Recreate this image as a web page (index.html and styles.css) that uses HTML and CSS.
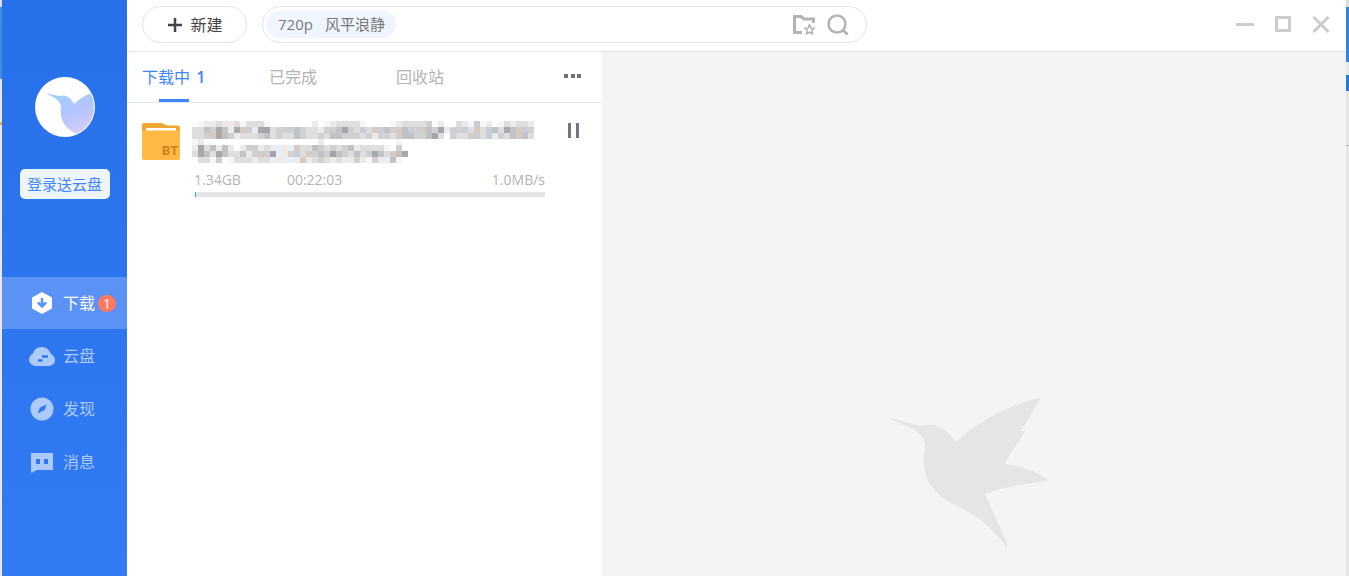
FILE: index.html
```
<!DOCTYPE html>
<html lang="zh-CN">
<head>
  <meta charset="UTF-8" />
  <meta name="viewport" content="width=device-width, initial-scale=1.0" />
  <title>下载</title>
  <link rel="stylesheet" href="styles.css">
</head>
<body>
  <div class="app">
    <aside class="sidebar">
      <svg class="avatar" viewBox="0 0 60 60" aria-hidden="true">
        <defs>
          <linearGradient id="wing" x1="0.2" y1="0" x2="0.7" y2="1">
            <stop offset="0" stop-color="#9fd2ff" />
            <stop offset="0.5" stop-color="#b3c4fc" />
            <stop offset="1" stop-color="#dccdfa" />
          </linearGradient>
          <clipPath id="round"><circle cx="30" cy="30" r="29" /></clipPath>
        </defs>
        <circle cx="30" cy="30" r="30" fill="#fff" />
        <path clip-path="url(#round)" fill="url(#wing)" d="M11 16L24 19C32 17 36 21 39 27C45 21 51 18 60 14V60H48C33 54 24 46 26 31C26 23 18 20 11 16Z" />
      </svg>
      <button class="login" type="button">登录送云盘</button>

      <nav class="nav">
        <a class="nav__item nav__item--active" href="#download">
          <svg class="nav__icon" viewBox="0 0 26 26" aria-hidden="true">
            <path fill="currentColor" d="M13 2L23 7.500V18.500L13 24L3 18.500V7.500Z" />
            <path fill="none" stroke="#5a92f5" stroke-width="2.500" d="M13 8V16M9 12.500L13 16.500L17 12.500" />
          </svg>
          <span>下载</span>
          <span class="badge">1</span>
        </a>
        <a class="nav__item" href="#cloud">
          <svg class="nav__icon" viewBox="0 0 26 26" aria-hidden="true">
            <path fill="currentColor" d="M7 23C3 23 0 20 0 16.500C0 13.500 2 11.500 4 10.500C5 6 9 4 13 4C17.500 4 20.500 7 21.500 10.500C24 12 26 14 26 17C26 20.500 23 23 19.500 23Z" />
            <path fill="none" stroke="#2f78f1" stroke-width="2.500" d="M9 17.500H13.500M13 13.500H19" />
          </svg>
          <span>云盘</span>
        </a>
        <a class="nav__item" href="#discover">
          <svg class="nav__icon" viewBox="0 0 26 26" aria-hidden="true">
            <circle cx="13" cy="13" r="11.500" fill="currentColor" />
            <path fill="#2f78f1" d="M17.500 8.500L15.500 14L8.500 17.500L11 11.500Z" />
          </svg>
          <span>发现</span>
        </a>
        <a class="nav__item" href="#message">
          <svg class="nav__icon" viewBox="0 0 26 26" aria-hidden="true">
            <path fill="currentColor" d="M2 4H24V21H8L2 24Z" />
            <path fill="#2f78f1" d="M7 10H11V15H7ZM15 10H19V15H15Z" />
          </svg>
          <span>消息</span>
        </a>
      </nav>
    </aside>

    <div class="main">
      <header class="topbar">
        <button class="new" type="button">
          <svg width="14" height="14" viewBox="0 0 14 14" aria-hidden="true">
            <path stroke="#444" stroke-width="2.500" d="M7 0V14M0 7H14" />
          </svg>
          新建
        </button>
        <form class="search">
          <label class="search__tag" for="keyword"><span>720p</span><span>风平浪静</span></label>
          <input class="search__input" id="keyword" type="text" />
          <button class="icon-button" type="button" aria-label="收藏夹">
            <svg width="22" height="20" viewBox="0 0 22 20" aria-hidden="true">
              <path fill="none" stroke="#b3b3b3" stroke-width="3" d="M9 17.500H1.500V1.500H8L11 4H20.500V8" />
              <path fill="#fff" stroke="#b3b3b3" stroke-width="1.500" stroke-linejoin="round" d="M16.500 9.500L17.900 13L21.300 13.300L18.700 15.500L19.600 19L16.500 17.200L13.400 19L14.300 15.500L11.700 13.300L15.100 13Z" />
            </svg>
          </button>
          <button class="icon-button" type="button" aria-label="搜索">
            <svg width="22" height="22" viewBox="0 0 22 22" aria-hidden="true">
              <circle cx="10" cy="10" r="8.500" fill="none" stroke="#b3b3b3" stroke-width="2.500" />
              <path stroke="#b3b3b3" stroke-width="3" d="M15.500 15.500L20.500 20.500" />
            </svg>
          </button>
        </form>
        <div class="window-buttons">
          <button class="icon-button" type="button" aria-label="最小化">
            <svg width="18" height="18" viewBox="0 0 18 18"><path stroke="#ccc" stroke-width="3" d="M0 8.500H18" /></svg>
          </button>
          <button class="icon-button" type="button" aria-label="最大化">
            <svg width="18" height="18" viewBox="0 0 18 18"><path fill="none" stroke="#ccc" stroke-width="3" d="M2.500 1.500H15.500V14.500H2.500Z" /></svg>
          </button>
          <button class="icon-button" type="button" aria-label="关闭">
            <svg width="18" height="18" viewBox="0 0 18 18"><path stroke="#ccc" stroke-width="3" d="M1.500 1L16.500 16M16.500 1L1.500 16" /></svg>
          </button>
        </div>
      </header>

      <div class="content">
        <section class="downloads">
          <nav class="tabs">
            <a class="tab tab--active" href="#downloading">下载中 <b class="tab__count">1</b></a>
            <a class="tab" href="#done">已完成</a>
            <a class="tab" href="#trash">回收站</a>
            <button class="icon-button tabs__more" type="button" aria-label="更多">
              <svg width="18" height="6" viewBox="0 0 18 6"><path fill="#6b707b" d="M0 0H4V4H0ZM7 0H11V4H7ZM13 0H17V4H13Z" /></svg>
            </button>
          </nav>

          <article class="task">
            <svg class="task__icon" viewBox="0 0 38 38" role="img" aria-label="BT">
              <path fill="#f0a732" d="M0 2Q0 0 2 0H20L25 2.500H36Q38 2.500 38 5V12H0Z" />
              <path fill="#fff" d="M4 5H34V9H4Z" />
              <path fill="#ffb945" d="M0 7.500H38V35Q38 37 36 37H2Q0 37 0 35Z" />
              <text class="task__type" x="20" y="32">BT</text>
            </svg>
            <div class="task__body">
              <svg class="task__name" id="taskName" viewBox="0 0 342 42" role="img" aria-label="文件名已隐藏"></svg>
              <div class="task__info">
                <span>1.34GB</span>
                <span class="task__time">00:22:03</span>
                <span class="task__speed">1.0MB/s</span>
              </div>
              <div class="task__bar"><div class="task__filled"></div></div>
            </div>
            <button class="icon-button task__pause" type="button" aria-label="暂停">
              <svg width="12" height="15" viewBox="0 0 12 15"><path fill="#707684" d="M0 0H3V15H0ZM8 0H11V15H8Z" /></svg>
            </button>
          </article>
        </section>

        <section class="detail">
          <svg class="detail__bird" viewBox="0 0 160 152" aria-hidden="true">
            <path fill="#e5e5e5" d="M2 20L31 28C47 24 57 30 67 44C89 23 115 9 150 0Q152 0 151 1.500L132 33H136L115 66C131 67 146 73 158 81C160 82 159 83 157 83C135 86 113 89 96 96L118 145C119 149 118 150 116 147C103 130 92 121 76 112C61 105 50 99 43 89C36 78 34 69 35 57L36 47C36 39 27 32 22 30C13 26 7 24 2 21Z" />
          </svg>
        </section>
      </div>
    </div>
  </div>

  <script src="scripts.js"></script>
</body>
</html>
```
FILE: styles.css
```
*{margin:0;padding:0;box-sizing:border-box;}
body{
  font-family:"Open Sans","Noto Sans CJK SC",sans-serif;
  font-size:16px;line-height:24px;color:#444;
  min-height:100vh;display:flex;
  padding:0 3px 0 2px;
  /* slivers of the desktop on both sides of the window */
  background:
    linear-gradient(#ddd 7px,#2f86e8 7px,#2f86e8 62px,#e8e8e8 62px,#e8e8e8 75px,#1f7be4 75px,#1f7be4 91px,#e6e6e6 91px,#e6e6e6 145px,#b5b5b5 145px,#b5b5b5 146px,#e6e6e6 146px) right/3px 100% no-repeat,
    linear-gradient(#ddd 7px,#3f8edb 7px,#3f8edb 79px,#eae8e6 79px,#eae8e6 122px,#e2b04a 122px,#e2b04a 125px,#eae8e6 125px) left/2px 100% no-repeat;
}
button,input{font:inherit;color:inherit;border:none;background:none;}
button{cursor:pointer;}
a{text-decoration:none;color:inherit;}
svg{display:block;flex-shrink:0;}
.app{flex:1;display:flex;min-width:0;}

/* Sidebar */
.sidebar{
  width:125px;flex-shrink:0;padding-top:77px;
  display:flex;flex-direction:column;align-items:center;
  background:linear-gradient(#2670ea,#327bf5);
}
.avatar{width:60px;height:60px;}
.login{
  width:90px;height:30px;margin:32px 0 78px;
  border-radius:5px;background:#eff5fe;color:#3f85ff;
  font-size:15px;line-height:30px;white-space:nowrap;
}
.nav{width:100%;display:grid;gap:1px;}
.nav__item{
  position:relative;height:52px;padding-left:27px;
  display:flex;align-items:center;gap:8px;color:#accafb;
}
.nav__item--active{background:#5a92f5;color:#fff;}
.nav__icon{width:26px;height:26px;}
.badge{
  position:absolute;right:11px;top:18px;
  width:18px;height:17px;border-radius:9px;background:#ff7860;
  font-size:14px;line-height:17px;text-align:center;
}

/* Top bar */
.main{flex:1;min-width:0;display:flex;flex-direction:column;}
.topbar{
  height:52px;padding:0 16px 2px 15px;
  display:flex;align-items:center;gap:15px;
  background:#fff;border-bottom:1px solid #e4e4e4;
}
.new{
  width:105px;height:37px;padding-left:2px;
  border:1px solid #e4e4e4;border-radius:19px;
  display:flex;align-items:center;justify-content:center;gap:8px;
}
.search{
  width:605px;height:37px;padding:0 17px 0 3px;
  border:1px solid #e4e4e4;border-radius:19px;
  display:flex;align-items:center;gap:12px;
}
.search__tag{
  display:flex;gap:12px;padding:0 11px 0 12px;
  border-radius:14px;background:#eff6ff;color:#777;
  font-size:15px;line-height:27px;white-space:nowrap;
}
.search__input{flex:1;min-width:0;outline:none;}
.icon-button{display:flex;align-items:center;justify-content:center;}
.window-buttons{margin-left:auto;display:flex;gap:20px;}

/* Download list */
.content{flex:1;display:flex;}
.downloads{width:475px;flex-shrink:0;background:#fff;}
.tabs{
  height:51px;padding:0 20px 0 15px;
  display:flex;border-bottom:1px solid #e2e6ec;
}
.tab{position:relative;width:127px;line-height:50px;color:#b3b3b3;}
.tab--active{color:#3f85ff;}
.tab--active::after{
  content:"";position:absolute;left:17px;bottom:0;
  width:30px;height:3px;background:#3f85ff;
}
.tab__count{margin-left:2px;font-weight:600;}
.tabs__more{margin-left:auto;}
.task{display:flex;align-items:flex-start;padding:17px 22px 0 15px;}
.task__icon{width:38px;height:38px;margin:3px 12px 0 0;}
.task__type{font-family:"Liberation Sans Narrow",Roboto,sans-serif;font-size:13px;font-weight:700;fill:#c98018;}
.task__body{width:353px;}
.task__name{width:342px;height:42px;margin-top:1px;}
.task__info{
  display:flex;padding:6px 0 0 2px;
  font-size:14px;line-height:22px;color:#b3b3b3;
}
.task__time{margin-left:46px;}
.task__speed{margin-left:auto;}
.task__bar{height:5px;margin:1px 0 0 3px;background:#e5e5e5;}
.task__filled{width:1px;height:5px;background:#1fb6e8;}
.task__pause{margin:3px 0 0 auto;}

/* Detail panel */
.detail{
  flex:1;display:flex;justify-content:center;align-items:flex-end;
  padding:0 10px 26px 0;background:#f4f4f4;
}
.detail__bird{width:160px;height:152px;}
```
FILE: scripts.js
```
// Mosaic that hides the file name, one character per 6px block
const colors = {
  1: '#f6f6f6', 2: '#ebebeb', 3: '#dedede', 4: '#d0d0d0', 5: '#c0c2c5', 6: '#a8a8ab',
  w: '#d6cac1', v: '#a8a3ab', u: '#c6ced7', l: '#e6f0fb', p: '#f4e8e0', t: '#b0a8a2',
};
const rows = [
  '012232p3133310000000201233331000012333340200321u120132332',
  '3354t526wu26v344u54332445v43u3wu54w5u4w54v244u3w3u5365wu4',
  '334wt54233345343354334355444342443w55445v30433wu3u2435w53',
  '120000000000000000000200000000000010',
  '26352520244232lplw335434345233331040',
  '36536533524w4vlp4u3w454v54353u653w56',
  '0331401333233lpll2w2343232242142l510',
];

const svg = document.querySelector('#taskName');
rows.forEach((row, y) => {
  [...row].forEach((key, x) => {
    if (!colors[key]) return;
    const rect = document.createElementNS('http://www.w3.org/2000/svg', 'rect');
    rect.setAttribute('x', x * 6);
    rect.setAttribute('y', y * 6);
    rect.setAttribute('width', 6);
    rect.setAttribute('height', 6);
    rect.setAttribute('fill', colors[key]);
    svg.appendChild(rect);
  });
});
```
